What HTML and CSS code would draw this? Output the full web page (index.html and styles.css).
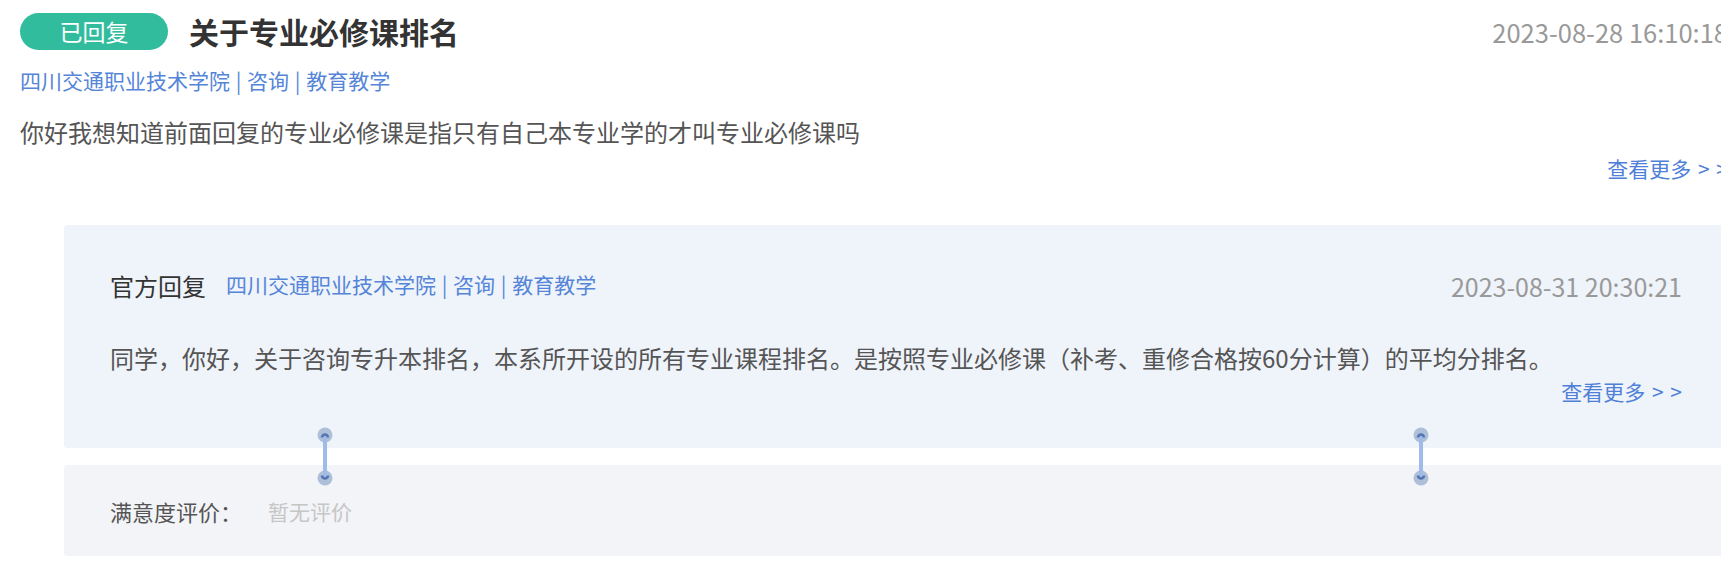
FILE: index.html
```html
<!DOCTYPE html>
<html lang="zh-CN">
<head>
<meta charset="utf-8">
<title>关于专业必修课排名</title>
<link rel="stylesheet" href="styles.css">
</head>
<body>
<div class="item">
  <div class="head">
    <div class="head-left">
      <span class="badge">已回复</span>
      <h1 class="title">关于专业必修课排名</h1>
    </div>
    <span class="date date-top">2023-08-28 16:10:18</span>
  </div>
  <div class="meta">四川交通职业技术学院 | 咨询 | 教育教学</div>
  <p class="question">你好我想知道前面回复的专业必修课是指只有自己本专业学的才叫专业必修课吗</p>
  <div class="more-row"><a class="more">查看更多 &gt; &gt;</a></div>

  <div class="reply">
    <div class="reply-head">
      <div class="reply-left">
        <span class="reply-label">官方回复</span>
        <span class="meta meta-inline">四川交通职业技术学院 | 咨询 | 教育教学</span>
      </div>
      <span class="date">2023-08-31 20:30:21</span>
    </div>
    <p class="answer">同学，你好，关于咨询专升本排名，本系所开设的所有专业课程排名。是按照专业必修课（补考、重修合格按60分计算）的平均分排名。</p>
    <div class="more-row"><a class="more">查看更多 &gt; &gt;</a></div>
  </div>

  <div class="rating">
    <span class="rating-label">满意度评价：</span>
    <span class="rating-value">暂无评价</span>
    <svg class="link link-a" width="16" height="59" viewBox="0 0 16 59" aria-hidden="true">
      <circle cx="8" cy="8" r="7.5" fill="#aebfd8"/>
      <circle cx="8" cy="51" r="7.5" fill="#aebfd8"/>
      <line x1="8" y1="9" x2="8" y2="50" stroke="#9fbbe8" stroke-width="4"/>
      <path d="M5 10.5 A3 3 0 0 1 11 10.5" fill="none" stroke="#5676b2" stroke-width="2.6"/>
      <path d="M5 48.5 A3 3 0 0 0 11 48.5" fill="none" stroke="#5676b2" stroke-width="2.6"/>
    </svg>
    <svg class="link link-b" width="16" height="59" viewBox="0 0 16 59" aria-hidden="true">
      <circle cx="8" cy="8" r="7.5" fill="#aebfd8"/>
      <circle cx="8" cy="51" r="7.5" fill="#aebfd8"/>
      <line x1="8" y1="9" x2="8" y2="50" stroke="#9fbbe8" stroke-width="4"/>
      <path d="M5 10.5 A3 3 0 0 1 11 10.5" fill="none" stroke="#5676b2" stroke-width="2.6"/>
      <path d="M5 48.5 A3 3 0 0 0 11 48.5" fill="none" stroke="#5676b2" stroke-width="2.6"/>
    </svg>
  </div>
</div>
</body>
</html>
```
FILE: styles.css
```css
html, body {
  margin: 0;
  padding: 0;
  background: #ffffff;
  overflow: hidden;
}
body {
  font-family: "Noto Sans CJK SC", "Microsoft YaHei", "Noto Sans", sans-serif;
  color: #555555;
}
.item {
  width: 1708px;
  margin-left: 20px;
  padding-top: 13px;
}
.head {
  display: flex;
  align-items: center;
  justify-content: space-between;
  height: 37px;
}
.head-left {
  display: flex;
  align-items: center;
}
.badge {
  display: flex;
  align-items: center;
  justify-content: center;
  width: 148px;
  height: 37px;
  border-radius: 19px;
  background: #32bc9e;
  color: #ffffff;
  font-size: 23px;
  line-height: 37px;
}
.title {
  margin: 0 0 0 21px;
  font-size: 30px;
  font-weight: 700;
  color: #333333;
  line-height: 37px;
}
.date {
  font-size: 25px;
  color: #999999;
  line-height: 36px;
}
.date-top {
  font-size: 25.5px;
}
.meta {
  margin-top: 15px;
  font-size: 21px;
  line-height: 30px;
  color: #5585d8;
  word-spacing: 1px;
}
.question {
  margin: 19px 0 0;
  font-size: 24px;
  line-height: 36px;
  color: #555555;
}
.more-row {
  display: flex;
  justify-content: flex-end;
}
.more {
  font-size: 21px;
  line-height: 30px;
  color: #4f80d8;
  margin-top: 3px;
  word-spacing: 2px;
}
.reply {
  margin: 42px 0 0 44px;
  padding: 43px 46px 42px;
  background: #eff3fa;
  border-radius: 4px;
}
.reply-head {
  display: flex;
  align-items: center;
  justify-content: space-between;
  height: 36px;
}
.reply-left {
  display: flex;
  align-items: center;
  gap: 20px;
}
.reply-label {
  font-size: 24px;
  line-height: 36px;
  color: #333333;
}
.meta-inline {
  margin-top: -4px;
}
.answer {
  margin: 36px 0 0;
  font-size: 24px;
  line-height: 36px;
  color: #555555;
}
.reply .more {
  margin-top: 0;
}
.rating {
  position: relative;
  display: flex;
  align-items: center;
  height: 91px;
  margin: 17px 0 0 44px;
  padding: 0 46px;
  background: #f2f4f8;
  border-radius: 4px;
}
.rating-label {
  font-size: 22px;
  color: #555555;
  line-height: 30px;
}
.rating-value {
  margin-left: 26px;
  font-size: 21px;
  color: #c6c6c6;
  line-height: 30px;
}
.link {
  position: absolute;
  top: -38px;
}
.link-a {
  left: 253px;
}
.link-b {
  left: 1349px;
}
```
